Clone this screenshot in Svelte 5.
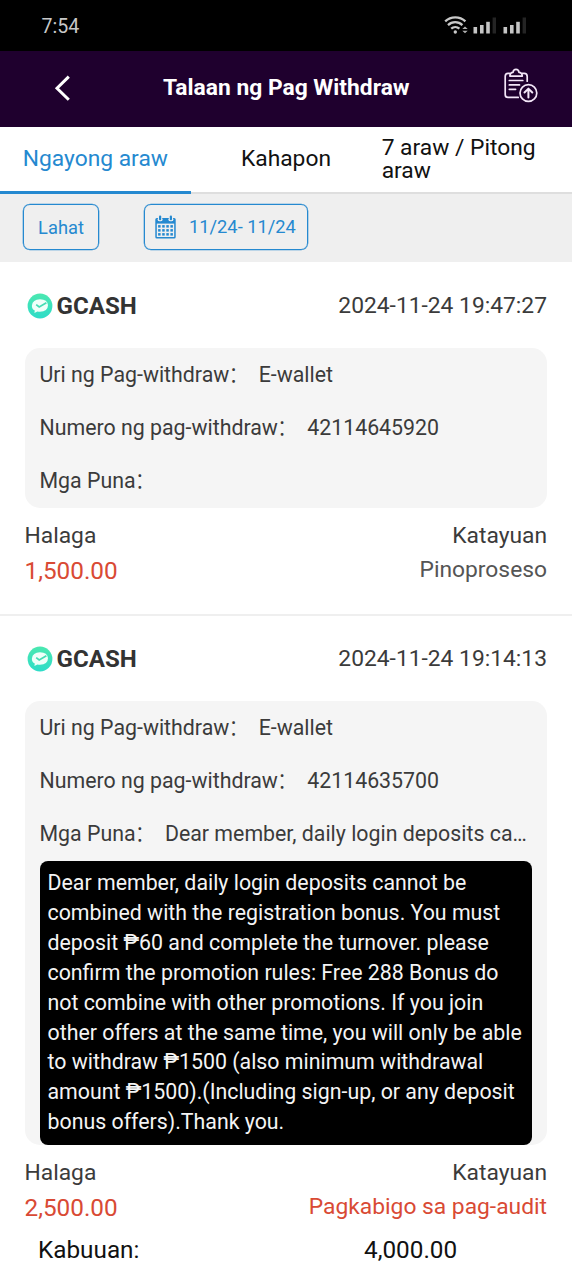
<script>
  const tabs = ['Ngayong araw', 'Kahapon', '7 araw / Pitong araw'];
  let active = $state(0);

  const records = [
    {
      time: '2024-11-24 19:47:27',
      number: '42114645920',
      remark: '',
      lines: [],
      amount: '1,500.00',
      status: 'Pinoproseso',
      failed: false
    },
    {
      time: '2024-11-24 19:14:13',
      number: '42114635700',
      remark: 'Dear member, daily login deposits ca…',
      lines: [
        'Dear member, daily login deposits cannot be',
        'combined with the registration bonus. You must',
        'deposit ₱60 and complete the turnover. please',
        'confirm the promotion rules: Free 288 Bonus do',
        'not combine with other promotions. If you join',
        'other offers at the same time, you will only be able',
        'to withdraw ₱1500 (also minimum withdrawal',
        'amount ₱1500).(Including sign-up, or any deposit',
        'bonus offers).Thank you.'
      ],
      amount: '2,500.00',
      status: 'Pagkabigo sa pag-audit',
      failed: true
    }
  ];
</script>

{#snippet bars()}
  <svg class="bars" width="24" height="18" viewBox="0 0 24 18">
    <rect x="0.5" y="11" width="3.6" height="6.5" fill="#c4c4c4" />
    <rect x="7" y="9" width="3.6" height="8.5" fill="#c4c4c4" />
    <rect x="13.2" y="5.8" width="3.6" height="11.7" fill="#c4c4c4" />
    <rect x="19.6" y="1.5" width="3.4" height="16" fill="#242424" />
  </svg>
{/snippet}

<div class="screen">
  <div class="statusbar">
    <span class="clock">7:54</span>
    <div class="signals">
      <svg class="wifi" width="25" height="20" viewBox="0 0 25 20">
        <g fill="none" stroke="#c9c9c9" stroke-width="2.3">
          <path d="M1.2 6.4 A14.5 14.5 0 0 1 21.4 6.4" />
          <path d="M4 10.1 A10.4 10.4 0 0 1 18.4 10.1" />
          <path d="M7.2 13.7 A6.1 6.1 0 0 1 15.4 13.7" />
        </g>
        <circle cx="11.3" cy="17" r="1.7" fill="#c9c9c9" />
        <path d="M18.3 14.1 L21 11.6 L23.7 14.1Z M18.3 15.8 L21 18.3 L23.7 15.8Z" fill="#b0b0b0" />
      </svg>
      {@render bars()}
      {@render bars()}
    </div>
  </div>

  <header>
    <svg class="back" width="20" height="30" viewBox="0 0 20 30">
      <path d="M17.8 3.6 L6 15.2 L17.8 26.8" fill="none" stroke="#fff" stroke-width="3" />
    </svg>
    <h1>Talaan ng Pag Withdraw</h1>
    <svg class="clip" width="36" height="36" viewBox="0 0 36 36">
      <g fill="none" stroke="#f3e6f8" stroke-width="1.7" stroke-linecap="round" stroke-linejoin="round">
        <path d="M6.5 5.4 H5 Q2.2 5.4 2.2 8.4 V26.4 Q2.2 29.4 5 29.4 H15.2" />
        <path d="M19.2 5.4 H21.2 Q24.2 5.4 24.2 8.4 V13.2" />
        <path d="M6.9 8.1 Q7 4.3 10 4.3 Q10.4 1.3 13 1.3 Q15.6 1.3 16 4.3 Q19 4.3 19.3 8.1 Z" />
        <path d="M6.3 12.5 H19.8 M6.3 16.9 H16.5 M6.3 21.3 H12.6" />
        <circle cx="25.4" cy="25" r="8.4" />
        <path d="M25.4 29.6 V20.8 M21.5 24.5 L25.4 20.6 L29.3 24.5" stroke-width="2" />
      </g>
    </svg>
  </header>

  <nav>
    {#each tabs as tab, i}
      <button class="tab" class:active={active === i} onclick={() => (active = i)}><span class="t{i}">{tab}</span></button>
    {/each}
  </nav>

  <div class="filters">
    <button class="chip all">Lahat</button>
    <button class="chip date">
      <svg width="21" height="24" viewBox="0 0 21 24">
        <path fill="#2589d0" d="M1.8 3 H3.2 V6 H7 V3 H14 V6 H17.8 V3 H19.2 Q20.7 3 20.7 4.6 V22 Q20.7 23.5 19.2 23.5 H1.8 Q0.3 23.5 0.3 22 V4.6 Q0.3 3 1.8 3Z" />
        <rect x="1.8" y="8.6" width="17.4" height="13.4" fill="#efefef" />
        <rect x="2.6" y="2.8" width="5" height="3.4" rx="1.7" fill="#efefef" />
        <rect x="13.4" y="2.8" width="5" height="3.4" rx="1.7" fill="#efefef" />
        <rect x="4" y="0.6" width="2.2" height="4.6" rx="1" fill="#2589d0" />
        <rect x="14.8" y="0.6" width="2.2" height="4.6" rx="1" fill="#2589d0" />
        {#each [10.1, 14.1, 18.1] as y}
          {#each [3.1, 7.2, 11.3, 15.4] as x}
            <rect {x} {y} width="2.5" height="2.5" fill="#2589d0" />
          {/each}
        {/each}
      </svg>
      <span>11/24- 11/24</span>
    </button>
  </div>

  <main>
    {#each records as r}
      <article>
        <div class="head">
          <svg width="26" height="26" viewBox="0 0 26 26">
            <defs>
              <linearGradient id="mint" x1="0" y1="0" x2="0" y2="1">
                <stop offset="0" stop-color="#4be8b0" />
                <stop offset="1" stop-color="#2edcc8" />
              </linearGradient>
            </defs>
            <circle cx="13" cy="13" r="12.4" fill="url(#mint)" />
            <path d="M7.4 20 L7.8 17.6 Q4.6 15.8 4.9 12.4 Q5.6 6.4 13 6.2 Q20.6 6.2 21 12.2 Q20.8 18.4 13 18.8 Q11.6 18.8 10.4 18.6 Z" fill="#effff9" />
            <path d="M9.2 11.6 L12.2 14 L19.4 9.8" fill="none" stroke="#45dcb4" stroke-width="1.7" />
          </svg>
          <strong>GCASH</strong>
          <time>{r.time}</time>
        </div>
        <div class="box">
          <div class="row"><span>Uri ng Pag-withdraw<i>：</i></span><span>E-wallet</span></div>
          <div class="row"><span>Numero ng pag-withdraw<i>：</i></span><span>{r.number}</span></div>
          <div class="row last"><span>Mga Puna<i>：</i></span><span>{r.remark}</span></div>
          {#if r.lines.length}
            <div class="note">
              {#each r.lines as line}<div>{line}</div>{/each}
            </div>
          {/if}
        </div>
        <div class="sum">
          <div>
            <div class="label">Halaga</div>
            <div class="amount">{r.amount}</div>
          </div>
          <div class="right">
            <div class="label">Katayuan</div>
            <div class="status" class:failed={r.failed}>{r.status}</div>
          </div>
        </div>
      </article>
    {/each}
  </main>

  <footer>
    <span>Kabuuan:</span>
    <span>4,000.00</span>
  </footer>
</div>

<style>
  .screen {
    width: 572px;
    height: 1280px;
    overflow: hidden;
    display: flex;
    flex-direction: column;
    background: #fff;
    color: #3b3b3b;
    font-family: Roboto, 'Noto Sans CJK SC', sans-serif;
    font-size: 21.34px;
  }
  button {
    font: inherit;
    border: 0;
    background: none;
    padding: 0;
    margin: 0;
  }
  svg { display: block; flex: none; }
  .statusbar {
    height: 51px;
    flex: none;
    box-sizing: border-box;
    background: #000;
    color: #c8c8c8;
    display: flex;
    justify-content: space-between;
    padding: 0 45px 0 41.5px;
  }
  .clock { font-size: 19.6px; line-height: 54px; }
  .signals { display: flex; padding-top: 15px; }
  .wifi { margin-right: 4px; }
  .bars { margin-top: 1px; }
  .bars + .bars { margin-left: 6px; }
  header {
    height: 76px;
    flex: none;
    background: #1f002e;
    color: #fff;
    display: flex;
    align-items: center;
    padding: 0 33.5px 0 51px;
  }
  .back { margin-bottom: 2px; }
  h1 {
    flex: 1;
    margin: 0;
    text-align: center;
    font-size: 22.8px;
    font-weight: 700;
    line-height: 72px;
    padding: 0 1px 2px 0;
  }
  .clip { margin-bottom: 6px; }
  nav {
    flex: none;
    display: grid;
    grid-template-columns: repeat(3, 1fr);
    height: 67px;
    box-sizing: border-box;
    border-bottom: 2px solid #dedede;
    font-size: 22.8px;
  }
  .tab {
    position: relative;
    color: #111;
    line-height: 23px;
    text-align: left;
    display: flex;
    align-items: center;
    justify-content: center;
    padding-bottom: 2px;
  }
  .active { color: #2589d0; }
  .active::after {
    content: '';
    position: absolute;
    left: 0;
    right: 0;
    bottom: -2px;
    height: 3px;
    background: #2589d0;
  }
  .t2 { width: 190px; }
  .filters {
    height: 68px;
    flex: none;
    box-sizing: border-box;
    background: #efefef;
    display: flex;
    padding: 10px 23px;
    gap: 45px;
  }
  .chip {
    height: 46px;
    box-sizing: border-box;
    border: 1.5px solid #2589d0;
    border-radius: 7px;
    color: #2589d0;
    font-size: 18.3px;
    display: flex;
    align-items: center;
    box-shadow: 0 0 0 0.3px #2589d0;
  }
  .all { width: 76px; justify-content: center; }
  .date { width: 164px; padding-left: 10px; gap: 13px; }
  .date span { padding-bottom: 2px; }
  main { flex: none; }
  article {
    padding: 0 25px 0 24.5px;
    height: 354px;
    box-sizing: border-box;
    border-bottom: 2px solid #efefef;
  }
  article:last-child { height: auto; border: 0; }
  .head {
    display: flex;
    align-items: center;
    height: 86px;
    padding-left: 2px;
  }
  article:last-child .head { height: 85px; }
  article:last-child .head > * { position: relative; top: -1px; }
  .head svg { margin-top: 2px; }
  .head strong { font-size: 24.1px; color: #333; margin-left: 4px; flex: 1; padding-top: 2px; }
  .head time { font-size: 22.8px; padding-top: 1px; }
  .box {
    background: #f5f5f5;
    border-radius: 15px;
    padding: 0 15px;
  }
  .row {
    height: 53px;
    line-height: 53px;
    display: flex;
    gap: 8px;
    white-space: pre;
  }
  .last { height: 54px; }
  i { font-style: normal; font-weight: 300; margin: 0 1px 0 -1px; }
  .note {
    background: #000;
    color: #f4f4f4;
    border-radius: 8px;
    padding: 7px 8px 8px;
    line-height: 29.9px;
    white-space: pre;
  }
  .sum {
    display: flex;
    justify-content: space-between;
    padding-top: 10px;
    font-size: 22.8px;
  }
  .right { text-align: right; }
  .label { height: 34px; line-height: 35px; }
  .amount { color: #d94a34; font-size: 24.3px; line-height: 38px; }
  .status { color: #555; line-height: 36px; }
  .failed { color: #d94a34; }
  footer {
    display: flex;
    color: #111;
    font-size: 24.3px;
    line-height: 36px;
    padding-left: 38px;
    margin-top: 5px;
  }
  footer span:first-child { width: 326px; }
</style>
